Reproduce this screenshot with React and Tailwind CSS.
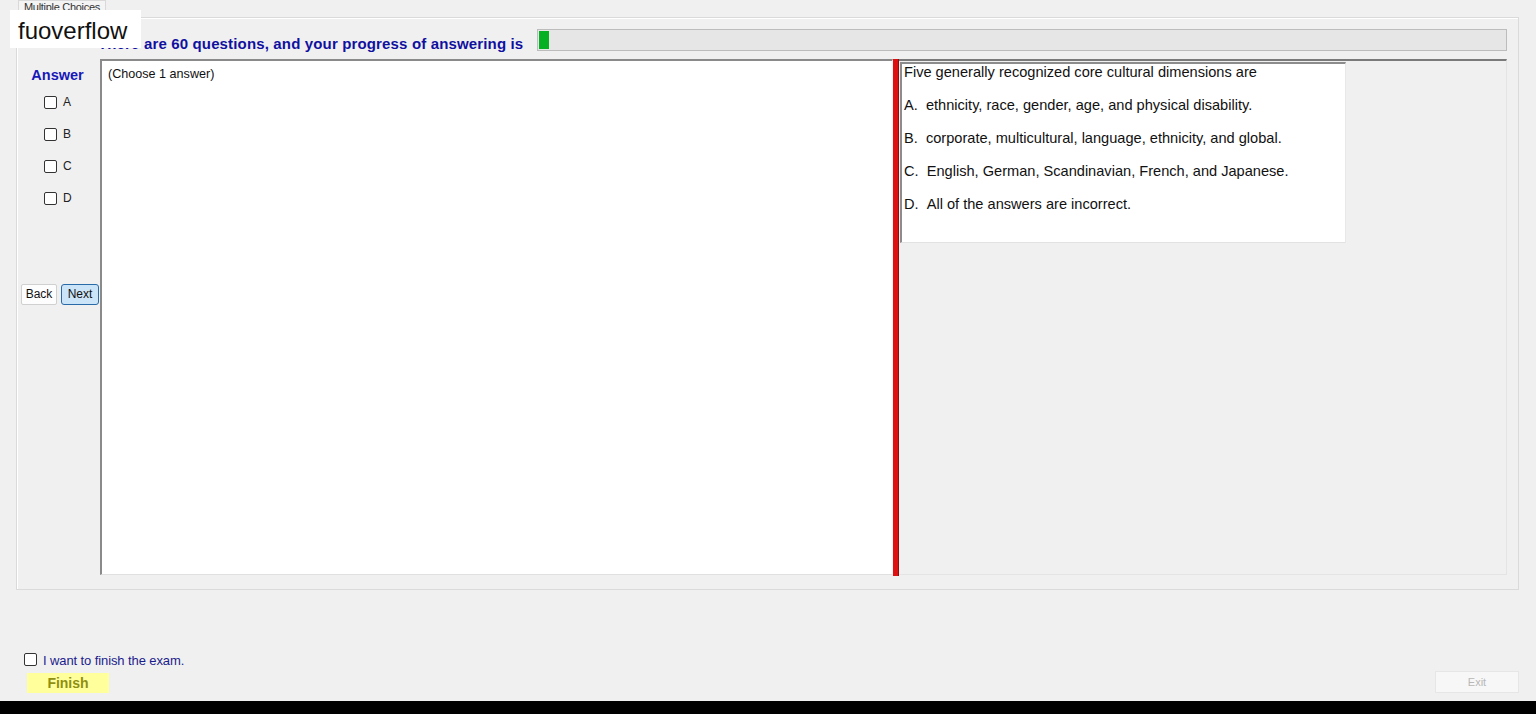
import React from "react";

function Check({ label, className = "" }) {
  return (
    <div className={"flex items-center " + className}>
      <span className="block w-[13px] h-[13px] border border-[#333333] rounded-[2px] bg-white" />
      <span className="ml-[6px] text-[12px] leading-[13px] text-[#222]">{label}</span>
    </div>
  );
}

export default function App() {
  const options = [
    "A.\u00a0\u00a0ethnicity, race, gender, age, and physical disability.",
    "B.\u00a0\u00a0corporate, multicultural, language, ethnicity, and global.",
    "C.\u00a0\u00a0English, German, Scandinavian, French, and Japanese.",
    "D.\u00a0\u00a0All of the answers are incorrect.",
  ];
  return (
    <div className="relative w-[1536px] h-[714px] overflow-hidden bg-[#f0f0f0] flex flex-col font-['Liberation_Sans',Arial,sans-serif]">
      {/* tab row */}
      <div className="h-[17px] pl-[18px] flex items-end">
        <div className="h-[17px] w-[88px] border border-b-0 border-[#d9d9d9] bg-[#f4f4f4] pl-[5px] text-[11px] leading-[12px] text-[#333] tracking-[-0.3px]">
          Multiple Choices
        </div>
      </div>

      {/* group box */}
      <div className="ml-[16px] w-[1503px] h-[573px] border border-[#dadada] bg-[#f0f0f0] flex flex-col shadow-[inset_1px_1px_0_#ffffff]">
        {/* header row */}
        <div className="mt-[11px] h-[22px] flex items-center">
          <div className="pl-[81px] w-[520px] pt-[8px] text-[15px] leading-[16px] font-bold tracking-[0.15px] text-[#1010a0] whitespace-nowrap">
            There are 60 questions, and your progress of answering is
          </div>
          <div className="w-[970px] h-[22px] bg-[#e6e6e6] border border-[#bcbcbc] p-[1px]">
            <div className="w-[10px] h-full bg-[#06b025]" />
          </div>
        </div>

        {/* main row */}
        <div className="mt-[8px] h-[516px] flex">
          {/* left column */}
          <div className="w-[83px] flex flex-col">
            <div className="mt-[8px] text-center text-[14.5px] font-bold text-[#1818b8] leading-[16px] pr-[2px]">Answer</div>
            <div className="mt-[13px] pl-[27px] flex flex-col gap-[19px]">
              <Check label="A" />
              <Check label="B" />
              <Check label="C" />
              <Check label="D" />
            </div>
            <div className="mt-[79px] pl-[4px] flex gap-[4px]">
              <button className="w-[36px] h-[21px] bg-[#fdfdfd] border border-[#d0d0d0] rounded-[2px] text-[12px] text-[#111] leading-[19px]">Back</button>
              <button className="w-[38px] h-[21px] bg-[#cce4f7] border border-[#2a6aa8] rounded-[3px] text-[12px] text-[#111] leading-[19px]">Next</button>
            </div>
          </div>

          {/* question text box */}
          <div className="w-[793px] h-full bg-white border-t-2 border-l-2 border-[#8a8a8a] border-r border-b border-r-[#f5f5f5] border-b-[#e0e0e0] pl-[6px] pt-[6px] text-[12.6px] leading-[14px] text-[#111]">
            (Choose 1 answer)
          </div>

          {/* splitter */}
          <div className="w-[6px] h-[517px] bg-[#dd1111] border-r border-[#8a1010]" />

          {/* right panel */}
          <div className="w-[608px] h-full border-t-2 border-[#7a7a7a] border-r border-r-[#e4e4e4] border-b border-b-[#e4e4e4] bg-[#f0f0f0] pl-[1px] pt-[1px]">
            <div className="w-[446px] h-[181px] bg-white border-t-2 border-l-2 border-[#8c8c8c] border-b border-b-[#e2e2e2] border-r border-r-[#e8e8e8] pl-[2px] text-[14.6px] leading-[16px] text-[#111]">
              <p className="mb-[17px]">Five generally recognized core cultural dimensions are</p>
              {options.map((o) => (
                <p key={o} className="mb-[17px] whitespace-pre">{o}</p>
              ))}
            </div>
          </div>
        </div>
      </div>

      {/* bottom area */}
      <div className="mt-[62px] pl-[24px] flex items-center h-[14px]">
        <span className="block w-[13px] h-[13px] border border-[#333333] rounded-[2px] bg-white" />
        <span className="ml-[6px] text-[13px] leading-[14px] text-[#1c1c8c] tracking-[-0.1px] pt-[3px]">I want to finish the exam.</span>
      </div>
      <div className="mt-[5px] h-[22px] flex items-center justify-between pl-[27px] pr-[17px]">
        <div className="w-[82px] h-[20px] mt-[2px] bg-[#ffff9c] flex items-center justify-center text-[14px] font-bold text-[#8f8f10]">Finish</div>
        <div className="w-[84px] h-[22px] bg-[#f7f7f7] border border-[#e6e6e6] flex items-center justify-center text-[11px] text-[#b8b8b8]">Exit</div>
      </div>
      <div className="mt-auto h-[13px] bg-black" />

      {/* overlay watermark */}
      <div className="absolute left-[10px] top-[10px] w-[131px] h-[38px] bg-white pl-[8px] pt-[7px] text-[24px] leading-[28px] text-[#111]">
        fuoverflow
      </div>
    </div>
  );
}
